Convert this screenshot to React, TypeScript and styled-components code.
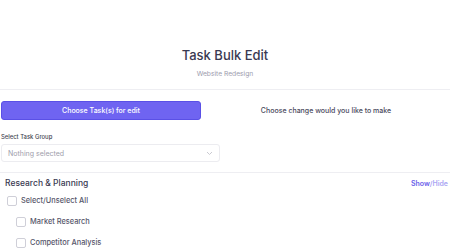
import * as React from 'react';
import styled, { createGlobalStyle } from 'styled-components';

const GlobalStyle = createGlobalStyle`
  body {
    margin: 0;
    background: #ffffff;
    font-family: Inter, "Noto Sans", sans-serif;
    color: #3b3a52;
  }
`;

const Page = styled.div`
  width: 450px;
  height: 250px;
  overflow: hidden;
  background: #fff;
`;

const Header = styled.header`
  display: flex;
  flex-direction: column;
  align-items: center;
  padding-top: 46px;
  height: 43px;
  border-bottom: 1px solid #eeeef2;
`;

const Title = styled.h1`
  margin: 0;
  font-size: 13px;
  font-weight: 500;
  line-height: 18px;
  color: #3a3952;
`;

const Subtitle = styled.div`
  margin-top: 6px;
  font-size: 6.7px;
  color: #9c9cad;
`;

const Body = styled.div`
  display: grid;
  grid-template-columns: 200px 1fr;
  column-gap: 20px;
  padding: 11px 1px 0 1px;
`;

const LeftCol = styled.div`
  display: flex;
  flex-direction: column;
`;

const PrimaryButton = styled.button`
  height: 19px;
  border: 1px solid #5a50e6;
  border-radius: 3px;
  background: #6f64f1;
  color: #fff;
  font-family: Inter, sans-serif;
  font-size: 7px;
  font-weight: 500;
  padding: 0;
`;

const ChangeHint = styled.div`
  display: flex;
  align-items: center;
  justify-content: center;
  height: 19px;
  font-size: 7px;
  font-weight: 500;
  color: #4a4a5c;
  padding-right: 18px;
`;

const FieldLabel = styled.label`
  margin-top: 13px;
  font-size: 5.9px;
  font-weight: 500;
  color: #3f3f4f;
`;

const SelectBox = styled.div`
  margin-top: 4px;
  width: 219px;
  height: 18px;
  display: flex;
  align-items: center;
  justify-content: space-between;
  padding: 0 6px 0 6px;
  box-sizing: border-box;
  border: 1px solid #ececf0;
  border-radius: 3px;
  font-size: 7px;
  color: #9e9eab;
`;

const Section = styled.section`
  margin-top: 10px;
  border-top: 1px solid #eeeef2;
  padding: 4px 2px 0 5px;
`;

const SectionHead = styled.div`
  display: flex;
  justify-content: space-between;
  align-items: center;
`;

const SectionTitle = styled.h2`
  margin: 0;
  font-size: 8.5px;
  font-weight: 500;
  line-height: 12px;
  color: #3a3952;
`;

const Toggle = styled.div`
  font-size: 7px;
  font-weight: 600;
  color: #6a60ea;
  span {
    color: #aaa5f3;
  }
`;

const CheckList = styled.div`
  display: flex;
  flex-direction: column;
  gap: 10px;
  margin-top: 6px;
`;

const CheckRow = styled.label<{ $indent?: boolean }>`
  display: flex;
  align-items: center;
  gap: 4px;
  padding-left: ${p => (p.$indent ? '11px' : '2px')};
  font-size: 7.4px;
  font-weight: 500;
  color: #55556a;
  height: 11px;
`;

const Box = styled.span`
  width: 8px;
  height: 8px;
  border: 1px solid #cfcfd8;
  border-radius: 2px;
  background: #fff;
`;

const Chevron = () => (
  <svg width="7" height="5" viewBox="0 0 7 5" fill="none">
    <path d="M1 1l2.5 2.5L6 1" stroke="#c4c4cc" strokeWidth="0.9" />
  </svg>
);

const tasks = ['Market Research', 'Competitor Analysis'];

const App = () => {
  return (
    <Page>
      <GlobalStyle />
      <Header>
        <Title>Task Bulk Edit</Title>
        <Subtitle>Website Redesign</Subtitle>
      </Header>
      <Body>
        <LeftCol>
          <PrimaryButton>Choose Task(s) for edit</PrimaryButton>
          <FieldLabel>Select Task Group</FieldLabel>
          <SelectBox>
            Nothing selected
            <Chevron />
          </SelectBox>
        </LeftCol>
        <ChangeHint>Choose change would you like to make</ChangeHint>
      </Body>
      <Section>
        <SectionHead>
          <SectionTitle>Research &amp; Planning</SectionTitle>
          <Toggle>
            Show<span>/Hide</span>
          </Toggle>
        </SectionHead>
        <CheckList>
          <CheckRow>
            <Box />
            Select/Unselect All
          </CheckRow>
          {tasks.map(t => (
            <CheckRow key={t} $indent>
              <Box />
              {t}
            </CheckRow>
          ))}
        </CheckList>
      </Section>
    </Page>
  );
};

export default App;
